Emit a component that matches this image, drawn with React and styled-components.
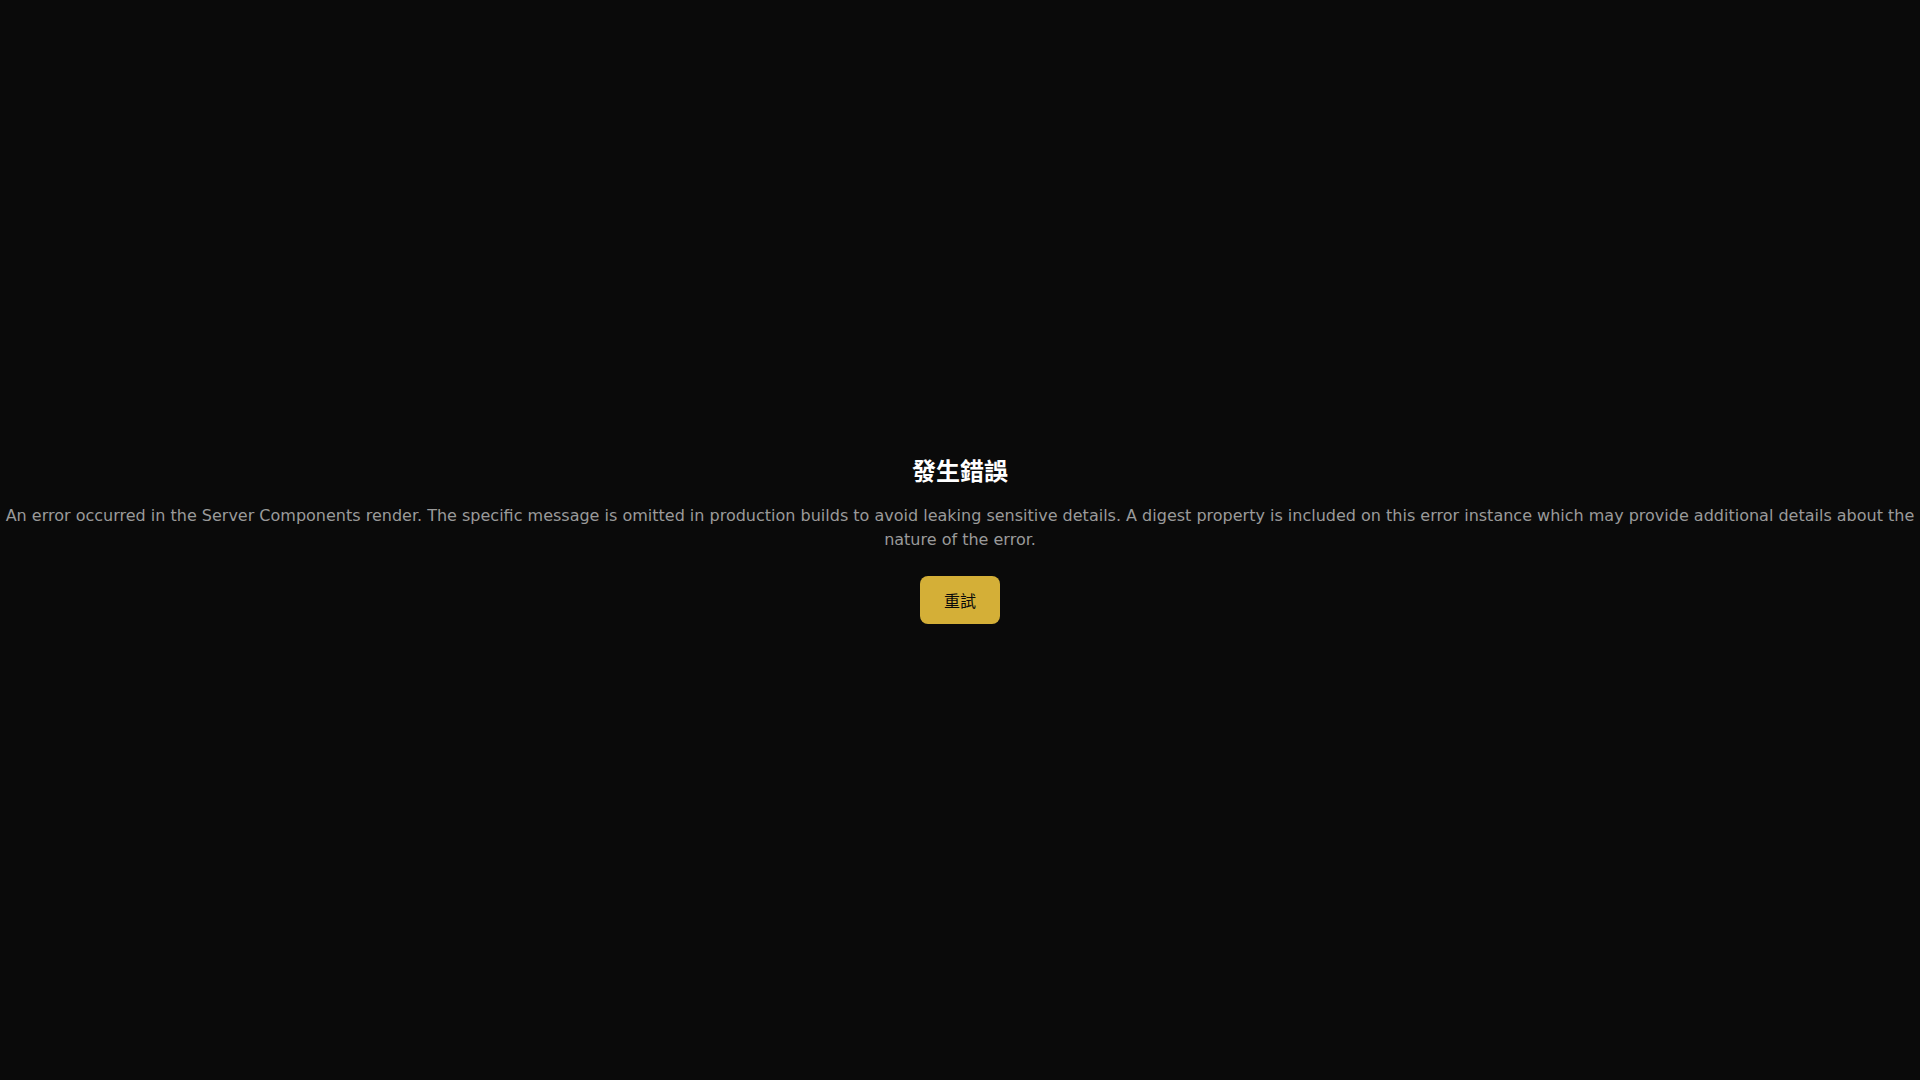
import React from "react";
import styled, { createGlobalStyle } from "styled-components";

const Global = createGlobalStyle`
  html, body { margin: 0; padding: 0; background: #0a0a0a; }
  body { font-family: "DejaVu Sans", "Noto Sans CJK TC", sans-serif; }
`;

const Page = styled.main`
  min-height: 100vh;
  display: flex;
  flex-direction: column;
  align-items: center;
  justify-content: center;
  text-align: center;
  background: #0a0a0a;
  font-family: "DejaVu Sans", "Noto Sans CJK TC", sans-serif;
`;

const Title = styled.h2`
  margin: 0 0 16px;
  font-size: 24px;
  line-height: 32px;
  font-weight: 700;
  color: #ffffff;
  font-family: "DejaVu Sans", "Noto Sans CJK TC", sans-serif;
`;

const Message = styled.p`
  margin: 0 0 24px;
  font-size: 16px;
  line-height: 24px;
  color: #9a9a9a;
`;

const RetryButton = styled.button`
  width: 80px;
  height: 48px;
  padding: 0 24px;
  border: none;
  border-radius: 8px;
  background: #d4af37;
  color: #0a0a0a;
  font-size: 16px;
  font-family: "DejaVu Sans", "Noto Sans CJK TC", sans-serif;
  cursor: pointer;
  white-space: nowrap;
`;

export default function App() {
  return (
    <>
      <Global />
      <Page>
        <Title>發生錯誤</Title>
        <Message>
          An error occurred in the Server Components render. The specific message is omitted in production builds to avoid leaking sensitive details. A digest property is included on this error instance which may provide additional details about the nature of the error.
        </Message>
        <RetryButton>重試</RetryButton>
      </Page>
    </>
  );
}
